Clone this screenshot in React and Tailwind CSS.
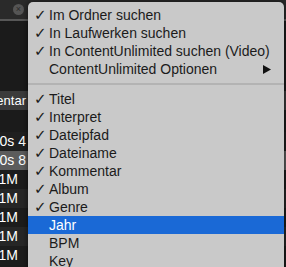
import React from "react";

const searchItems = [
  { label: "Im Ordner suchen", checked: true },
  { label: "In Laufwerken suchen", checked: true },
  { label: "In ContentUnlimited suchen (Video)", checked: true },
  { label: "ContentUnlimited Optionen", submenu: true },
];

const columnItems = [
  { label: "Titel", checked: true },
  { label: "Interpret", checked: true },
  { label: "Dateipfad", checked: true },
  { label: "Dateiname", checked: true },
  { label: "Kommentar", checked: true },
  { label: "Album", checked: true },
  { label: "Genre", checked: true },
  { label: "Jahr", active: true },
  { label: "BPM" },
  { label: "Key" },
];

const listRows = [
  { text: "0s 4", bg: "bg-[#1f1f1f]", pad: "pr-[260px]" },
  { text: "0s 8", bg: "bg-[#5c5c5c]", pad: "pr-[260px]" },
  { text: "1M", bg: "bg-[#1c1c1c]", pad: "pr-[268px]" },
  { text: "1M", bg: "bg-[#262626]", pad: "pr-[268px]" },
  { text: "1M", bg: "bg-[#1c1c1c]", pad: "pr-[268px]" },
  { text: "1M", bg: "bg-[#262626]", pad: "pr-[268px]" },
  { text: "1M", bg: "bg-[#1c1c1c]", pad: "pr-[268px]" },
];

function MenuItem({ item }) {
  return (
    <div
      className={`flex h-[18px] items-center whitespace-nowrap pr-[13px] ${
        item.active ? "bg-[#1a69d6] text-white" : "text-[#1b1b1b]"
      }`}
    >
      <span
        className="w-[21px] pl-[6px] text-[15px] font-bold leading-none"
        style={{ fontFamily: '"DejaVu Sans", sans-serif' }}
      >
        {item.checked ? "✓" : ""}
      </span>
      <span className="flex-1 text-[14px] leading-none">{item.label}</span>
      {item.submenu && (
        <svg width="8" height="9" viewBox="0 0 8 9">
          <path d="M0 0 L8 4.5 L0 9 Z" fill="#111" />
        </svg>
      )}
    </div>
  );
}

export default function App() {
  return (
    <div
      className="relative h-[267px] w-[286px] overflow-hidden bg-[#1b1b1b] text-white"
      style={{ fontFamily: '"Liberation Sans", Arial, sans-serif' }}
    >
      {/* background app */}
      <div className="flex h-[21px] items-center border-b-2 border-[#575757] bg-[#2a2a2a] pl-[13px]">
        <div className="flex h-[11px] w-[11px] items-center justify-center rounded-full bg-[#555555]">
          <span className="text-[9px] leading-none text-[#2a2a2a]">×</span>
        </div>
      </div>
      <div className="h-[70px]" />
      <div className="flex h-[19px] items-center justify-end whitespace-nowrap bg-[#3b3b3b] pr-[260px] text-[13px]">
        <span className="shrink-0">Kommentar</span>
      </div>
      <div className="h-[22px]" />
      {listRows.map((r, i) => (
        <div
          key={i}
          className={`flex h-[19px] items-center justify-end whitespace-nowrap text-[14px] ${r.pad} ${r.bg}`}
        >
          <span className="shrink-0">{r.text}</span>
        </div>
      ))}

      {/* popup menu */}
      <div className="absolute left-[28px] top-[2px] h-[280px] w-[256px] rounded-t-[5px] bg-[#c9c9c9] pt-[4px] shadow-[0_0_6px_rgba(0,0,0,0.6)]">
        {searchItems.map((item) => (
          <MenuItem key={item.label} item={item} />
        ))}
        <div className="flex h-[12px] items-center">
          <div className="h-[2px] w-full bg-[#b3b3b3]" />
        </div>
        {columnItems.map((item) => (
          <MenuItem key={item.label} item={item} />
        ))}
      </div>
    </div>
  );
}
